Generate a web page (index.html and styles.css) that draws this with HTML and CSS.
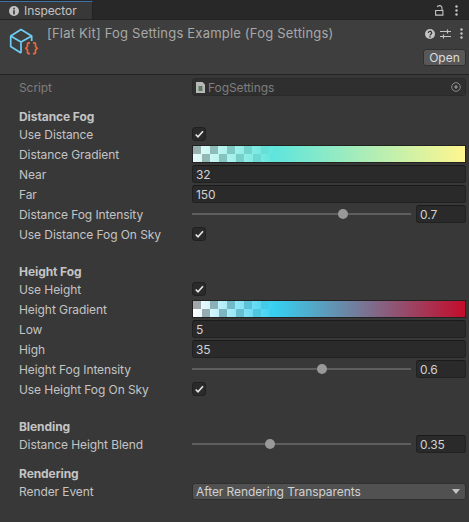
FILE: index.html
```html
<!DOCTYPE html>
<html lang="en">
<head>
    <meta charset="UTF-8">
    <meta name="viewport" content="width=device-width, initial-scale=1.0">
    <title>Inspector</title>
    <link rel="stylesheet" href="styles.css">
</head>
<body>
    <!-- Tab bar -->
    <div class="tabbar">
        <div class="tab">
            <svg class="tab-icon" width="10" height="10" viewBox="0 0 10 10"><circle cx="5" cy="5" r="5" fill="#c4c4c4"/><rect x="4.200" y="1.800" width="1.600" height="1.600" fill="#383838"/><rect x="4.200" y="4.200" width="1.600" height="4.200" fill="#383838"/></svg>
            <span>Inspector</span>
        </div>
        <div class="tabbar-tools">
            <svg width="9" height="11" viewBox="0 0 9 11"><path d="M7 5.500V3A2.500 2.300 0 0 0 2.200 2M.6 5.500h7.300v4.600H.6z" fill="none" stroke="#c4c4c4" stroke-width="1.100"/></svg>
            <svg width="3" height="11" viewBox="0 0 3 11"><circle cx="1.500" cy="1.500" r="1.200" fill="#c4c4c4"/><circle cx="1.500" cy="5.500" r="1.200" fill="#c4c4c4"/><circle cx="1.500" cy="9.500" r="1.200" fill="#c4c4c4"/></svg>
        </div>
    </div>

    <!-- Header -->
    <div class="header">
        <svg class="asset-icon" width="32" height="32" viewBox="0 0 32 32">
            <path d="M13 15 2.700 9 13 2.500 23.700 9V14M2.700 9V19.500L13 26M13 15V26M13 15 23.700 9" fill="none" stroke="#6ecdf2" stroke-width="1.700" stroke-linejoin="round"/>
            <path d="M22 15.800h-1.500q-1 0-1 1v2.700l-1.700 1.700 1.700 1.700v2.700q0 1 1 1H22M25 15.800h1.500q1 0 1 1v2.700l1.700 1.700-1.700 1.700v2.700q0 1-1 1H25" fill="none" stroke="#f2643c" stroke-width="1.700"/>
        </svg>
        <div class="header-title">[Flat Kit] Fog Settings Example (Fog Settings)</div>
        <div class="header-right">
            <div class="header-tools">
                <svg class="help-icon" width="10" height="10" viewBox="0 0 10 10"><circle cx="5" cy="5" r="5" fill="#c4c4c4"/><path d="M3.300 3.900a1.700 1.600 0 1 1 2.500 1.400c-.6.300-.8.600-.8 1.100" fill="none" stroke="#383838" stroke-width="1.300"/><rect x="4.300" y="7.200" width="1.400" height="1.400" fill="#383838"/></svg>
                <svg width="11" height="10" viewBox="0 0 11 10"><path d="M0 2.500h11M0 7.500h11M7.500 0.500v4M3.500 5.500v4" fill="none" stroke="#c4c4c4" stroke-width="1.200"/></svg>
                <svg width="3" height="11" viewBox="0 0 3 11"><circle cx="1.500" cy="1.500" r="1.200" fill="#c4c4c4"/><circle cx="1.500" cy="5.500" r="1.200" fill="#c4c4c4"/><circle cx="1.500" cy="9.500" r="1.200" fill="#c4c4c4"/></svg>
            </div>
            <button class="open-btn">Open</button>
        </div>
    </div>

    <!-- Properties -->
    <div class="props">
        <div class="row disabled">
            <label>Script</label>
            <div class="field object-field">
                <svg width="9" height="11" viewBox="0 0 9 11"><path d="M0 0h6.500L9 2.500V11H0z" fill="#b8b8b8"/><rect x="2.500" y="4" width="4" height="5" fill="#5c7a62"/></svg>
                <span>FogSettings</span>
                <svg class="target" width="10" height="10" viewBox="0 0 10 10"><circle cx="5" cy="5" r="4.300" fill="none" stroke="#8a8a8a" stroke-width="1"/><circle cx="5" cy="5" r="1.700" fill="#8a8a8a"/></svg>
            </div>
        </div>

        <div class="heading">Distance Fog</div>
        <div class="row"><label>Use Distance</label><div class="check"><svg width="12" height="12" viewBox="0 0 12 12"><path d="M2.700 6.500 5 8.800 10 3.300" fill="none" stroke="#e4e4e4" stroke-width="1.700"/></svg></div></div>
        <div class="row"><label>Distance Gradient</label><div class="gradient gradient-distance"></div></div>
        <div class="row"><label>Near</label><div class="field">32</div></div>
        <div class="row"><label>Far</label><div class="field">150</div></div>
        <div class="row">
            <label>Distance Fog Intensity</label>
            <div class="slider"><div class="track"><div class="thumb" style="left: 68.8%"></div></div><div class="field num">0.7</div></div>
        </div>
        <div class="row"><label>Use Distance Fog On Sky</label><div class="check"><svg width="12" height="12" viewBox="0 0 12 12"><path d="M2.700 6.500 5 8.800 10 3.300" fill="none" stroke="#e4e4e4" stroke-width="1.700"/></svg></div></div>

        <div class="heading space">Height Fog</div>
        <div class="row"><label>Use Height</label><div class="check"><svg width="12" height="12" viewBox="0 0 12 12"><path d="M2.700 6.500 5 8.800 10 3.300" fill="none" stroke="#e4e4e4" stroke-width="1.700"/></svg></div></div>
        <div class="row"><label>Height Gradient</label><div class="gradient gradient-height"></div></div>
        <div class="row"><label>Low</label><div class="field">5</div></div>
        <div class="row"><label>High</label><div class="field">35</div></div>
        <div class="row">
            <label>Height Fog Intensity</label>
            <div class="slider"><div class="track"><div class="thumb" style="left: 59.4%"></div></div><div class="field num">0.6</div></div>
        </div>
        <div class="row"><label>Use Height Fog On Sky</label><div class="check"><svg width="12" height="12" viewBox="0 0 12 12"><path d="M2.700 6.500 5 8.800 10 3.300" fill="none" stroke="#e4e4e4" stroke-width="1.700"/></svg></div></div>

        <div class="heading space">Blending</div>
        <div class="row">
            <label>Distance Height Blend</label>
            <div class="slider"><div class="track"><div class="thumb" style="left: 35.5%"></div></div><div class="field num">0.35</div></div>
        </div>

        <div class="heading">Rendering</div>
        <div class="row">
            <label>Render Event</label>
            <div class="dropdown"><span>After Rendering Transparents</span><i class="arrow"></i></div>
        </div>
    </div>
</body>
</html>
```

FILE: styles.css
```css
* {
    box-sizing: border-box;
}

body {
    margin: 0;
    height: 522px;
    overflow: hidden;
    background-color: #383838;
    color: #c4c4c4;
    font-family: 'Inter', sans-serif;
    font-size: 12px;
    letter-spacing: -0.08px;
}

.tabbar {
    display: flex;
    justify-content: space-between;
    height: 19px;
    padding-top: 1px;
    background-color: #282828;
}

.tab {
    display: flex;
    align-items: center;
    gap: 5px;
    width: 93px;
    padding-left: 9px;
    background-color: #383838;
    border-top: 1px solid #3a72a6;
    border-right: 1px solid #232323;
}

.tabbar-tools {
    display: flex;
    align-items: center;
    gap: 11px;
    padding-right: 11px;
}

.header {
    display: flex;
    height: 56px;
    background-color: #3e3e3e;
    border-top: 1px solid #232323;
    border-bottom: 1px solid #232323;
}

.asset-icon {
    margin: 7px 0 0 8px;
}

.header-title {
    flex: 1;
    margin: 5px 0 0 7px;
    font-size: 13px;
    letter-spacing: 0.2px;
    color: #a8a8a8;
}

.header-right {
    display: flex;
    flex-direction: column;
    align-items: flex-end;
    padding: 8px 3px 0 0;
}

.header-tools {
    display: flex;
    align-items: center;
    gap: 9px;
    padding-right: 3px;
}

.help-icon {
    margin-right: -4px;
}

.open-btn {
    width: 43px;
    height: 17px;
    margin-top: 10px;
    padding: 0;
    background-color: #585858;
    color: #dcdcdc;
    border: 1px solid #303030;
    border-radius: 3px;
    font-family: inherit;
    font-size: 12px;
}

.props {
    padding: 2px 3px 0 19px;
}

.row {
    display: flex;
    align-items: center;
    height: 20px;
}

.row label {
    width: 173px;
    flex: none;
}

.disabled {
    color: #7e7e7e;
}

.heading {
    display: flex;
    align-items: flex-end;
    height: 17px;
    margin-top: 10px;
    font-weight: 700;
    color: #c4c4c4;
}

.heading.space {
    margin-top: 18px;
}

.field {
    flex: 1;
    height: 18px;
    padding-left: 3px;
    line-height: 17px;
    background-color: #2a2a2a;
    border: 1px solid #212121;
    border-top-color: #1a1a1a;
    border-radius: 3px;
    color: #d2d2d2;
}

.object-field {
    display: flex;
    align-items: center;
    gap: 3px;
    color: #7e7e7e;
    background-color: #2f2f2f;
    border-color: #2a2a2a;
}

.object-field .target {
    margin-left: auto;
    margin-right: 4px;
}

.check {
    width: 14px;
    height: 14px;
    background-color: #2a2a2a;
    border: 1px solid #212121;
    border-radius: 3px;
}

.check svg {
    display: block;
}

.gradient {
    flex: 1;
    height: 18px;
    border: 1px solid #212121;
    background-size: 100% 100%, 17px 16px;
    background-position: 0 0, 0 0;
}

.gradient-distance {
    background-image: linear-gradient(to right, rgba(95, 229, 220, 0.15) 0%, rgba(95, 229, 220, 1) 30%, #fff68f 100%),
        conic-gradient(#ffffff 25%, #a6a6a6 0 50%, #ffffff 0 75%, #a6a6a6 0);
}

.gradient-height {
    background-image: linear-gradient(to right, rgba(54, 208, 240, 0) 0%, rgba(54, 208, 240, 1) 30%, #c40c2b 100%),
        conic-gradient(#ffffff 25%, #a6a6a6 0 50%, #ffffff 0 75%, #a6a6a6 0);
}

.slider {
    flex: 1;
    display: flex;
    align-items: center;
    gap: 5px;
}

.track {
    position: relative;
    flex: 1;
    height: 2px;
    background-color: #5e5e5e;
}

.thumb {
    position: absolute;
    top: -4px;
    width: 10px;
    height: 10px;
    margin-left: -5px;
    background-color: #999999;
    border-radius: 50%;
}

.num {
    flex: none;
    width: 50px;
}

.dropdown {
    flex: 1;
    display: flex;
    align-items: center;
    justify-content: space-between;
    height: 17px;
    padding: 0 5px 0 3px;
    background-color: #515151;
    border: 1px solid #303030;
    border-radius: 3px;
    color: #d2d2d2;
}

.arrow {
    width: 0;
    height: 0;
    border-left: 4px solid transparent;
    border-right: 4px solid transparent;
    border-top: 5px solid #c4c4c4;
}
```
